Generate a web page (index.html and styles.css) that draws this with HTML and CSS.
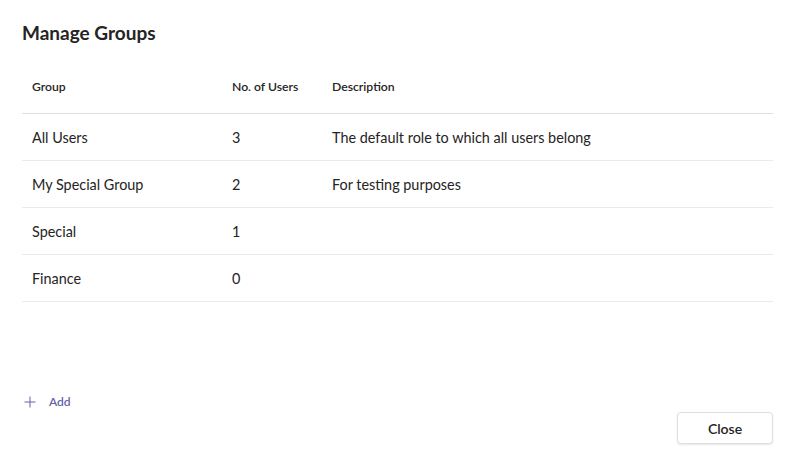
FILE: index.html
```html
<!DOCTYPE html>
<html lang="en">
<head>
  <meta charset="UTF-8">
  <title>Manage Groups</title>
  <link rel="stylesheet" href="styles.css">
</head>
<body>

<div class="dialog">
  <h2 class="title">Manage Groups</h2>

  <div class="groups-table">
    <div class="row head">
      <div class="cell col-name">Group</div>
      <div class="cell col-count">No. of Users</div>
      <div class="cell col-desc">Description</div>
    </div>
    <div class="row">
      <div class="cell col-name">All Users</div>
      <div class="cell col-count">3</div>
      <div class="cell col-desc">The default role to which all users belong</div>
    </div>
    <div class="row">
      <div class="cell col-name">My Special Group</div>
      <div class="cell col-count">2</div>
      <div class="cell col-desc">For testing purposes</div>
    </div>
    <div class="row">
      <div class="cell col-name">Special</div>
      <div class="cell col-count">1</div>
      <div class="cell col-desc"></div>
    </div>
    <div class="row">
      <div class="cell col-name">Finance</div>
      <div class="cell col-count">0</div>
      <div class="cell col-desc"></div>
    </div>
  </div>

  <div class="footer">
    <button class="add-btn">
      <svg width="12" height="12" viewBox="0 0 12 12"><path d="M6 0.5V11.5M0.5 6H11.5" stroke="#6264a7" stroke-width="1"/></svg>
      <span>Add</span>
    </button>
    <div class="actions">
      <button class="close-btn">Close</button>
    </div>
  </div>
</div>

</body>
</html>
```

FILE: styles.css
```css
body {
  margin: 0;
  font-family: 'Lato', 'Open Sans', sans-serif;
  background-color: #ffffff;
  color: #252423;
}
.dialog {
  display: flex;
  flex-direction: column;
  height: 463px;
  padding: 0 21px 0 22px;
  box-sizing: border-box;
}
.title {
  margin: 0;
  padding-top: 21px;
  font-size: 19px;
  font-weight: 700;
  line-height: 24px;
}
.groups-table {
  margin-top: 15px;
}
.row {
  display: flex;
  height: 47px;
  align-items: center;
  border-bottom: 1px solid #edebe9;
  font-size: 14.4px;
  box-sizing: border-box;
}
.row.head {
  height: 54px;
  border-bottom-color: #e1dfdd;
  font-size: 12.2px;
  font-weight: 600;
}
.cell {
  padding-left: 10px;
  box-sizing: border-box;
}
.col-name {
  width: 200px;
}
.col-count {
  width: 100px;
}
.col-desc {
  flex: 1;
}
.footer {
  margin-top: auto;
  display: flex;
  flex-direction: column;
  padding-bottom: 19px;
}
.add-btn {
  align-self: flex-start;
  display: flex;
  align-items: center;
  gap: 13px;
  background: none;
  border: none;
  padding: 0 0 0 2px;
  color: #6264a7;
  font-family: inherit;
  font-size: 12px;
  font-weight: 600;
  cursor: pointer;
}
.actions {
  display: flex;
  justify-content: flex-end;
  margin-top: 3px;
}
.close-btn {
  width: 96px;
  height: 32px;
  background-color: #ffffff;
  border: 1px solid #e1dfdd;
  border-radius: 4px;
  box-shadow: 0 1px 2px rgba(0, 0, 0, 0.1);
  font-family: inherit;
  font-size: 14px;
  font-weight: 600;
  color: #252423;
  cursor: pointer;
}
```
